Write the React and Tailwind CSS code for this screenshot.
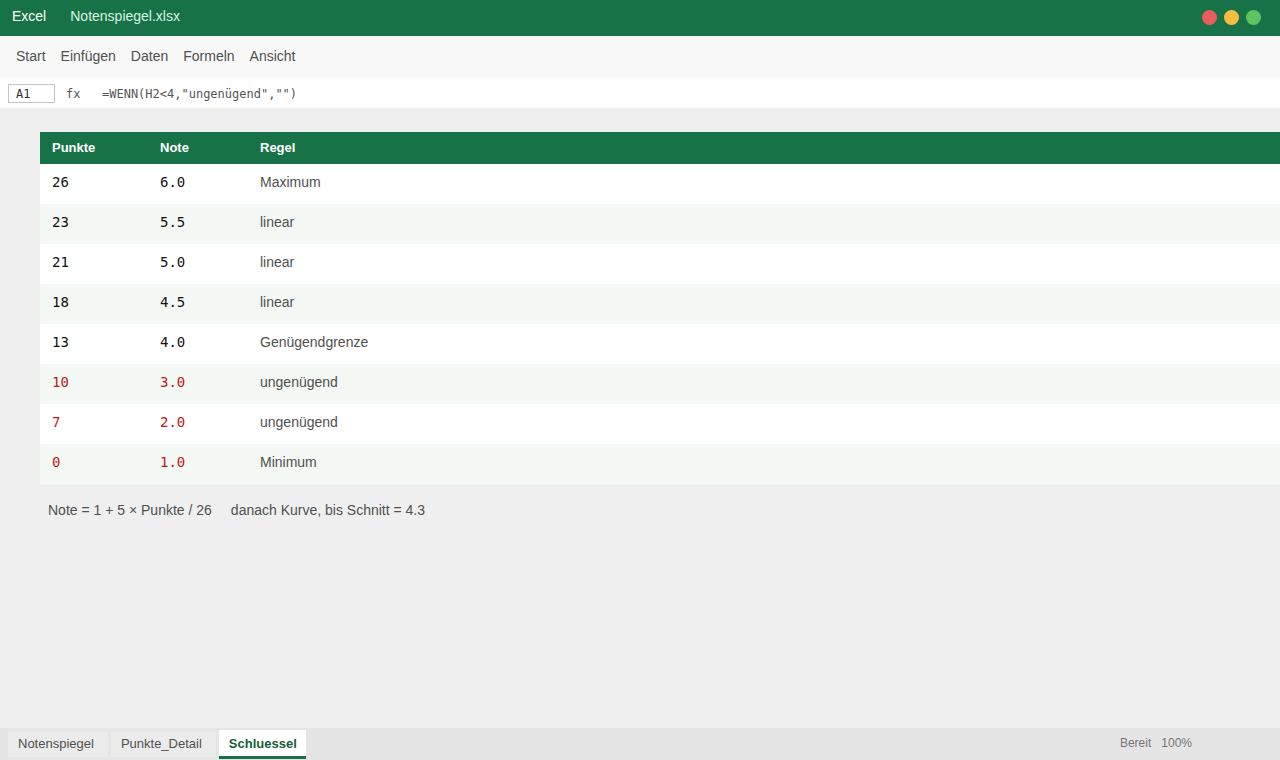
import clsx from "clsx";

const menuItems = ["Start", "Einfügen", "Daten", "Formeln", "Ansicht"];

const windowButtons = [
  { label: "Schliessen", color: "bg-[#eb5c5c]" },
  { label: "Minimieren", color: "bg-[#f7bc42]" },
  { label: "Maximieren", color: "bg-[#5bc660]" },
];

const rows = [
  { points: "26", grade: "6.0", rule: "Maximum" },
  { points: "23", grade: "5.5", rule: "linear" },
  { points: "21", grade: "5.0", rule: "linear" },
  { points: "18", grade: "4.5", rule: "linear" },
  { points: "13", grade: "4.0", rule: "Genügendgrenze" },
  { points: "10", grade: "3.0", rule: "ungenügend" },
  { points: "7", grade: "2.0", rule: "ungenügend" },
  { points: "0", grade: "1.0", rule: "Minimum" },
];

const sheets = ["Notenspiegel", "Punkte_Detail", "Schluessel"];
const activeSheet = "Schluessel";

const TitleBar = () => (
  <header className="flex h-9 shrink-0 items-start justify-between bg-[#177347] pr-[19px] pl-3 text-sm">
    <div className="flex gap-6 pt-1.5">
      <span className="text-white">Excel</span>
      <span className="text-[#d9f2e3]">Notenspiegel.xlsx</span>
    </div>
    <div className="flex gap-[7px] pt-2.5">
      {windowButtons.map((button) => (
        <button
          key={button.label}
          type="button"
          aria-label={button.label}
          className={clsx("size-[15px] rounded-full", button.color)}
        />
      ))}
    </div>
  </header>
);

const MenuBar = () => (
  <nav className="flex h-[42px] shrink-0 items-center gap-[15px] bg-[#f8f8f8] px-4 pb-0.5 text-sm text-[#505050]">
    {menuItems.map((item) => (
      <button key={item} type="button">
        {item}
      </button>
    ))}
  </nav>
);

const FormulaBar = () => (
  <div className="flex h-[30px] shrink-0 items-center bg-white px-2 font-['DejaVu_Sans_Mono',monospace] text-xs text-[#555555]">
    <input
      aria-label="Namenfeld"
      defaultValue="A1"
      className="h-[19px] w-[47px] border border-[#c4c4c4] px-[7px] pt-0.5 text-[#333333]"
    />
    <label htmlFor="formula" className="ml-[11px] w-9 pt-0.5">
      fx
    </label>
    <input id="formula" defaultValue={'=WENN(H2<4,"ungenügend","")'} className="min-w-0 flex-1 pt-0.5" />
  </div>
);

const GradeTable = () => (
  <table className="w-full table-fixed border-collapse text-left">
    <thead>
      <tr className="h-8 bg-[#177347] text-[13px] leading-4 text-white">
        <th className="w-[108px] pl-3">Punkte</th>
        <th className="w-[100px] pl-3">Note</th>
        <th className="pl-3">Regel</th>
      </tr>
    </thead>
    <tbody>
      {rows.map((row) => (
        <tr
          key={row.points}
          className={clsx(
            "h-10 align-top text-sm odd:bg-white even:bg-[#f3f8f4] last:h-[41px]",
            Number(row.grade) < 4 ? "text-[#c01818]" : "text-[#111111]"
          )}
        >
          <td className="pt-2 pl-3 font-['DejaVu_Sans_Mono',monospace]">{row.points}</td>
          <td className="pt-2 pl-3 font-['DejaVu_Sans_Mono',monospace]">{row.grade}</td>
          <td className="pt-2 pl-3 text-[#505050]">{row.rule}</td>
        </tr>
      ))}
    </tbody>
  </table>
);

const SheetBar = () => (
  <footer className="flex h-8 shrink-0 items-start justify-between bg-[#e5e5e5] pr-[88px] pl-2">
    <div className="flex gap-[3px] pt-0.5 text-[13px] leading-5">
      {sheets.map((sheet) => (
        <button
          key={sheet}
          type="button"
          className={clsx(
            "pl-2.5",
            sheet === activeSheet
              ? "h-[29px] border-b-[3px] border-[#177347] bg-white pt-0.5 pr-[9px] font-bold text-[#175c38]"
              : "mt-0.5 h-[25px] bg-[#ebebeb] pr-3.5 pb-0.5 text-[#505050]"
          )}
        >
          {sheet}
        </button>
      ))}
    </div>
    <div className="flex gap-2.5 pt-[7px] text-xs text-[#757575]">
      <span>Bereit</span>
      <span>100%</span>
    </div>
  </footer>
);

const App = () => {
  return (
    <div className="flex min-h-screen flex-col bg-[#efefef] font-['Liberation_Sans',Arial,sans-serif]">
      <TitleBar />
      <MenuBar />
      <FormulaBar />
      <main className="flex-1 pt-6 pl-10">
        <GradeTable />
        <p className="mt-[15px] flex gap-[19px] pl-2 text-sm text-[#505050]">
          <span>Note = 1 + 5 × Punkte / 26</span>
          <span>danach Kurve, bis Schnitt = 4.3</span>
        </p>
      </main>
      <SheetBar />
    </div>
  );
};

export default App;
